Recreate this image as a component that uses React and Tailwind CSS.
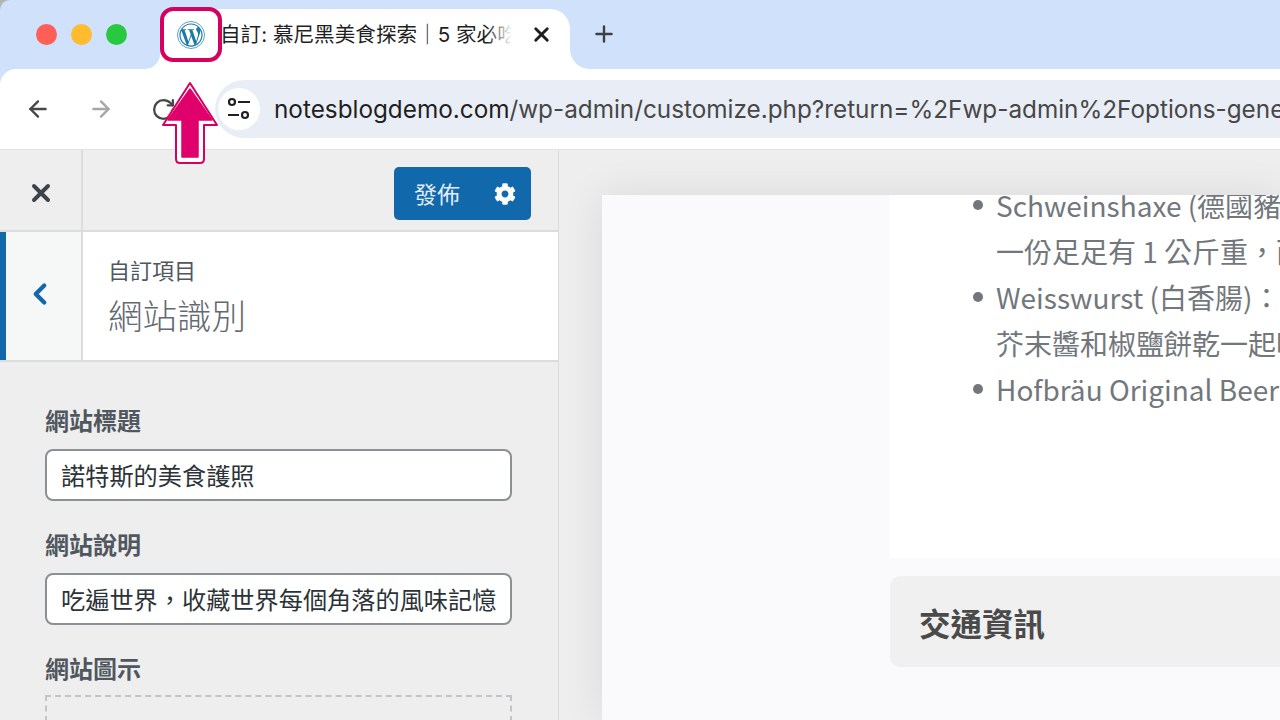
import React from 'react';
import { ArrowLeft, ArrowRight, RotateCw, X, Plus, ChevronLeft } from 'lucide-react';
import { FaWordpressSimple, FaCog } from 'react-icons/fa';

const cjk = "font-['Inter','Noto_Sans_CJK_TC',sans-serif]";
const preview = "font-['Noto_Sans_CJK_TC',sans-serif]";

const TabBar = () => (
  <div className="flex h-[69px] bg-[#d0e2fb] relative rounded-tl-[10px]">
    <div className="flex items-center gap-[14px] pl-[36px] w-[160px] h-full pb-[1px] shrink-0">
      <span className="w-[21px] h-[21px] rounded-full bg-[#ff5f57]" />
      <span className="w-[21px] h-[21px] rounded-full bg-[#febc2e]" />
      <span className="w-[21px] h-[21px] rounded-full bg-[#28c840]" />
    </div>
    <div className="mt-[9px] w-[410px] h-[60px] bg-white rounded-t-[20px] flex items-center pl-[17px] relative shrink-0">
      <span className="w-[28px] h-[28px] rounded-full border-[1.5px] border-[#5ba3c7] flex items-center justify-center shrink-0 mb-[9px]">
        <FaWordpressSimple className="w-[24px] h-[24px] text-[#1b7aa6]" />
      </span>
      <div className={`${cjk} relative ml-[15px] w-[292px] overflow-hidden whitespace-nowrap text-[20.6px] leading-[28px] text-[#1f1f1f] mb-[9px]`}>
        自訂: 慕尼黑美食探索｜5 家必吃
        <div className="absolute right-0 top-0 bottom-0 w-[26px] bg-gradient-to-r from-transparent to-white" />
      </div>
      <X className="w-[23px] h-[23px] text-[#1f1f1f] ml-[18px] mb-[9px] shrink-0" strokeWidth={3} />
    </div>
    <div className="flex items-center pl-[21px] pb-[1px]">
      <Plus className="w-[26px] h-[26px] text-[#3c4043]" strokeWidth={2.2} />
    </div>
    <div className="absolute left-[145px] bottom-0 w-[15px] h-[15px] bg-white">
      <div className="w-full h-full bg-[#d0e2fb] rounded-br-[15px]" />
    </div>
    <div className="absolute left-[570px] bottom-0 w-[20px] h-[20px] bg-white">
      <div className="w-full h-full bg-[#d0e2fb] rounded-bl-[20px]" />
    </div>
  </div>
);

const SiteInfoIcon = () => (
  <svg width="24" height="24" viewBox="0 0 24 24" fill="none" stroke="#1f1f1f" strokeWidth="2.2">
    <circle cx="5" cy="5" r="3" />
    <path d="M11 5h12" />
    <path d="M1 18h11" />
    <circle cx="18" cy="18" r="3" />
  </svg>
);

const Toolbar = () => (
  <div className="bg-[#d0e2fb]">
    <div className="flex items-center h-[80px] bg-white rounded-tl-[16px] pl-[25px] overflow-hidden">
      <ArrowLeft className="w-[26px] h-[26px] text-[#474747] shrink-0" strokeWidth={2.2} />
      <ArrowRight className="w-[26px] h-[26px] text-[#a6a6a6] ml-[37px] shrink-0" strokeWidth={2.2} />
      <RotateCw className="w-[25px] h-[25px] text-[#474747] ml-[37px] shrink-0" strokeWidth={2.2} />
      <div className="ml-[39px] flex-1 min-w-0 h-[58px] bg-[#e9eef6] rounded-l-[29px] flex items-center pl-[3px] overflow-hidden">
        <div className="w-[42px] h-[42px] rounded-full bg-white flex items-center justify-center shrink-0">
          <SiteInfoIcon />
        </div>
        <div className="ml-[14px] whitespace-nowrap font-['Inter',sans-serif] text-[24.3px] text-[#474747]">
          <span className="text-[#1f1f1f]">notesblogdemo.com</span>/wp-admin/customize.php?return=%2Fwp-admin%2Foptions-gene
        </div>
      </div>
    </div>
  </div>
);

const Field = ({ label, value }) => (
  <div className="mb-[27px]">
    <div className="text-[24px] leading-[32px] font-bold text-[#50575e] mb-[13px]">{label}</div>
    <input
      readOnly
      value={value}
      className="block w-[467px] h-[52px] px-[14px] pb-[2px] bg-white border-2 border-[#8c8f94] rounded-[8px] text-[24.2px] text-[#2c3338] outline-none"
    />
  </div>
);

const Sidebar = () => (
  <div className={`${preview} w-[559px] shrink-0 h-full bg-[#eeeeee] border-r border-[#dcdcde] overflow-hidden`}>
    <div className="flex h-[82px] border-b-2 border-[#dcdcde]">
      <div className="w-[83px] border-r-2 border-[#dcdcde] flex items-center justify-center pt-[6px]">
        <X className="w-[28px] h-[28px] text-[#3c434a]" strokeWidth={3.4} />
      </div>
      <div className="flex-1 flex justify-end items-start pt-[17px] pr-[27px]">
        <div className="w-[137px] h-[53px] bg-[#1168ab] rounded-[5px] flex items-center pl-[20px] text-[23px] text-[#e3edf5]">
          發佈
          <FaCog className="w-[22px] h-[22px] text-white ml-[34px]" />
        </div>
      </div>
    </div>
    <div className="flex h-[130px] border-b-2 border-[#dcdcde]">
      <div className="w-[83px] border-l-[6px] border-l-[#1168ab] border-r-2 border-r-[#dcdcde] bg-[#f6f7f7] flex items-center justify-center shrink-0 pr-[7px] pb-[4px]">
        <ChevronLeft className="w-[34px] h-[34px] text-[#1168ab]" strokeWidth={3} />
      </div>
      <div className="flex-1 bg-white pl-[25px] pt-[20px]">
        <div className="text-[22px] leading-[34px] text-[#50575e]">自訂項目</div>
        <div className="text-[34.5px] leading-[56px] font-light text-[#646970]">網站識別</div>
      </div>
    </div>
    <div className="pl-[45px] pt-[42px]">
      <Field label="網站標題" value="諾特斯的美食護照" />
      <Field label="網站說明" value="吃遍世界，收藏世界每個角落的風味記憶" />
      <div className="text-[24px] leading-[32px] font-bold text-[#50575e] mb-[11px]">網站圖示</div>
      <div className="w-[467px] h-[100px] border-2 border-dashed border-[#c3c4c7]" />
    </div>
  </div>
);

const items = [
  { text: 'Schweinshaxe (德國豬腳', bullet: true },
  { text: '一份足足有 1 公斤重，而' },
  { text: 'Weisswurst (白香腸)：', bullet: true },
  { text: '芥末醬和椒鹽餅乾一起吃' },
  { text: 'Hofbräu Original Beer', bullet: true },
];

const Preview = () => (
  <div className="flex-1 min-w-0 h-full bg-[#eeeeee] pt-[45px] pl-[43px] flex overflow-hidden">
    <div className={`${preview} flex-1 min-w-0 bg-[#fafafc] pl-[288px] h-full shadow-[0_0_40px_rgba(0,0,0,0.09)]`}>
      <div className="h-[363px] bg-white overflow-hidden pl-[106px]">
        <div className="-mt-[13px]">
          {items.map((item) => (
            <div key={item.text} className="relative h-[46px] leading-[46px] text-[28px] text-[#72777c] whitespace-nowrap">
              {item.bullet && <span className="absolute -left-[23px] top-[18px] w-[10px] h-[10px] rounded-full bg-[#72777c]" />}
              {item.text}
            </div>
          ))}
        </div>
      </div>
      <div className="mt-[18px] h-[91px] bg-[#f0f0f0] rounded-l-[10px] flex items-center pl-[29px] pt-[2px] text-[31.5px] font-bold text-[#4a4a4a]">
        交通資訊
      </div>
    </div>
  </div>
);

const App = () => (
  <div className="w-[1280px] h-[720px] overflow-hidden relative flex flex-col bg-[#b5b5b5]">
    <TabBar />
    <Toolbar />
    <div className="flex flex-1 min-h-0 border-t border-[#e3e3e3]">
      <Sidebar />
      <Preview />
    </div>
    {/* highlight around the favicon */}
    <div className="absolute left-[160px] top-[7px] w-[62px] h-[55px] border-[4px] border-[#d6005f] rounded-[13px]" />
    <svg className="absolute left-[160px] top-[80px]" width="60" height="86" viewBox="0 0 60 86">
      <path d="M30 3 L57 45 L44 45 L44 79 Q44 83 40 83 L20 83 Q16 83 16 79 L16 45 L3 45 Z" fill="#fff" stroke="#d6005f" strokeWidth="2" strokeLinejoin="round" />
      <path d="M30 9 L52 40 L38 40 L38 77 L22 77 L22 40 L8 40 Z" fill="#e0006b" stroke="#e0006b" strokeWidth="1.5" strokeLinejoin="round" />
    </svg>
  </div>
);

export default App;
